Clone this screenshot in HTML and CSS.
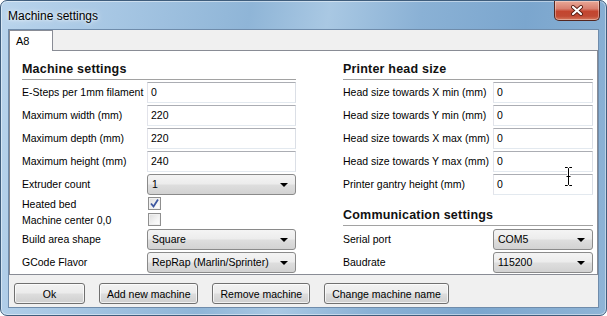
FILE: index.html
```html
<!DOCTYPE html>
<html lang="en">
<head>
    <meta charset="UTF-8">
    <title>Machine settings</title>
    <link rel="stylesheet" href="styles.css">
</head>
<body>
    <div class="window">
        <div class="titlebar">
            <span class="title">Machine settings</span>
            <div class="close-btn">
                <svg width="14" height="11" viewBox="0 0 14 11">
                    <path d="M3 2 L11 9 M11 2 L3 9" stroke="#5a1f14" stroke-width="4" stroke-linecap="round"/>
                    <path d="M3 2 L11 9 M11 2 L3 9" stroke="#fff" stroke-width="2.2" stroke-linecap="round"/>
                </svg>
            </div>
        </div>

        <div class="client">
            <div class="tabs">
                <div class="tab active">A8</div>
            </div>

            <div class="panel">
                <div class="column left-col">
                    <div class="section-title">Machine settings</div>

                    <span class="label">E-Steps per 1mm filament</span>
                    <div class="textbox">0</div>
                    <span class="label">Maximum width (mm)</span>
                    <div class="textbox">220</div>
                    <span class="label">Maximum depth (mm)</span>
                    <div class="textbox">220</div>
                    <span class="label">Maximum height (mm)</span>
                    <div class="textbox">240</div>
                    <span class="label">Extruder count</span>
                    <div class="combo">1<span class="arrow"></span></div>

                    <span class="label small-row">Heated bed</span>
                    <div class="small-row">
                        <div class="checkbox">
                            <svg width="11" height="11" viewBox="0 0 11 11">
                                <path d="M2 5.5 L4.5 8.5 L9 1.5" fill="none" stroke="#3d57a0" stroke-width="1.8"/>
                            </svg>
                        </div>
                    </div>
                    <span class="label small-row">Machine center 0,0</span>
                    <div class="small-row">
                        <div class="checkbox"></div>
                    </div>

                    <span class="label">Build area shape</span>
                    <div class="combo">Square<span class="arrow"></span></div>
                    <span class="label">GCode Flavor</span>
                    <div class="combo">RepRap (Marlin/Sprinter)<span class="arrow"></span></div>
                </div>

                <div class="column right-col">
                    <div class="section-title">Printer head size</div>

                    <span class="label">Head size towards X min (mm)</span>
                    <div class="textbox">0</div>
                    <span class="label">Head size towards Y min (mm)</span>
                    <div class="textbox">0</div>
                    <span class="label">Head size towards X max (mm)</span>
                    <div class="textbox">0</div>
                    <span class="label">Head size towards Y max (mm)</span>
                    <div class="textbox">0</div>
                    <span class="label">Printer gantry height (mm)</span>
                    <div class="textbox">0</div>

                    <div class="section-title comm">Communication settings</div>

                    <span class="label">Serial port</span>
                    <div class="combo">COM5<span class="arrow"></span></div>
                    <span class="label">Baudrate</span>
                    <div class="combo">115200<span class="arrow"></span></div>
                </div>

                <!-- mouse cursor over the panel -->
                <svg class="ibeam" width="9" height="21" viewBox="0 0 9 21">
                    <path d="M1 1.5 H3.5 L4.5 2.5 L5.5 1.5 H8 M4.5 2.5 V18.5 M1 19.5 H3.5 L4.5 18.5 L5.5 19.5 H8 M2.5 10.5 H6.5" fill="none" stroke="#fff" stroke-width="3"/>
                    <path d="M1 1.5 H3.5 L4.5 2.5 L5.5 1.5 H8 M4.5 2.5 V18.5 M1 19.5 H3.5 L4.5 18.5 L5.5 19.5 H8 M2.5 10.5 H6.5" fill="none" stroke="#000" stroke-width="1"/>
                </svg>
            </div>

            <div class="buttons">
                <button class="btn btn-ok">Ok</button>
                <button class="btn">Add new machine</button>
                <button class="btn">Remove machine</button>
                <button class="btn">Change machine name</button>
            </div>
        </div>
    </div>
</body>
</html>
```

FILE: styles.css
```css
body {
    margin: 0;
    padding: 0;
    background-color: #fff;
    font-family: 'Liberation Sans', Arial, sans-serif;
    font-size: 10.5px;
    color: #000;
}

.window {
    width: 607px;
    height: 316px;
    box-sizing: border-box;
    border: 1px solid #3f5d7c;
    border-radius: 7px;
    background: linear-gradient(100deg, #b9d4ec 0%, #a6c6e3 18%, #8fb5d7 38%, #a9c8e3 50%, #8ab1d5 64%, #7ba6ce 80%, #8fb4d6 100%);
    box-shadow: inset 0 0 0 1px rgba(255, 255, 255, 0.45);
    overflow: hidden;
}

.titlebar {
    height: 28px;
    display: flex;
    align-items: flex-start;
}

.title {
    margin: 8px 0 0 7px;
    font-size: 12px;
    line-height: 14px;
    text-shadow: 0 0 6px rgba(255, 255, 255, 0.9), 0 0 3px rgba(255, 255, 255, 0.8);
}

.close-btn {
    margin-left: auto;
    margin-right: 6px;
    width: 46px;
    height: 20px;
    box-sizing: border-box;
    border: 1px solid #54261f;
    border-top: none;
    border-radius: 0 0 5px 5px;
    background: linear-gradient(#e9a897 0%, #d98070 40%, #c3452f 55%, #c14a34 80%, #d67a5e 100%);
    box-shadow: inset 0 0 0 1px rgba(255, 255, 255, 0.35);
    display: flex;
    align-items: center;
    justify-content: center;
}

.client {
    margin: 0 7px;
    height: 279px;
    box-sizing: border-box;
    border: 1px solid #6f8cab;
    background-color: #f0f0f0;
    display: flex;
    flex-direction: column;
}

.tabs {
    height: 20px;
    display: flex;
    position: relative;
    z-index: 1;
}

.tab {
    width: 44px;
    height: 21px;
    box-sizing: border-box;
    padding: 4px 0 0 6px;
    border: 1px solid #898c95;
    border-bottom: none;
    background-color: #fff;
    font-size: 11px;
    line-height: 13px;
}

.panel {
    height: 225px;
    box-sizing: border-box;
    border: 1px solid #898c95;
    background-color: #fff;
    padding-left: 12px;
    display: flex;
    gap: 47px;
    position: relative;
}

.column {
    display: grid;
    row-gap: 2px;
    align-content: start;
}

.left-col {
    grid-template-columns: 125px 149px;
}

.right-col {
    grid-template-columns: 150px 100px;
}

.section-title {
    grid-column: 1 / 3;
    padding: 10px 0 1px 0;
    border-bottom: 1px solid #a2a2a2;
    font-size: 12.5px;
    font-weight: bold;
    letter-spacing: 0.2px;
    line-height: 17px;
    color: #111;
}

.section-title.comm {
    margin-bottom: 1px;
}

.label {
    height: 21px;
    line-height: 21px;
    white-space: nowrap;
}

.textbox {
    height: 21px;
    box-sizing: border-box;
    border: 1px solid;
    border-color: #abadb3 #dbdfe6 #e3e9ef #e2e3ea;
    padding-left: 3px;
    line-height: 19px;
}

.combo {
    height: 21px;
    box-sizing: border-box;
    border: 1px solid #8a8a8a;
    border-radius: 3px;
    background: linear-gradient(#f4f4f4 0%, #ececec 48%, #dedede 52%, #d2d2d2 100%);
    padding-left: 4px;
    line-height: 19px;
    position: relative;
}

.arrow {
    position: absolute;
    right: 7px;
    top: 8px;
    border-left: 4px solid transparent;
    border-right: 4px solid transparent;
    border-top: 4px solid #000;
}

.small-row {
    height: 14px;
    line-height: 14px;
}

.checkbox {
    width: 13px;
    height: 13px;
    box-sizing: border-box;
    margin-left: 1px;
    border: 1px solid #8f8f8f;
    background: linear-gradient(135deg, #dcdcdc 0%, #f4f4f4 60%, #fff 100%);
    box-shadow: inset 0 0 0 1px #f0f0f0;
    display: flex;
    align-items: center;
    justify-content: center;
}

.ibeam {
    position: absolute;
    left: 554px;
    top: 115px;
}

.buttons {
    display: flex;
    gap: 14px;
    padding: 8px 0 0 5px;
}

.btn {
    height: 21px;
    padding: 0 7px;
    font-family: 'Liberation Sans', Arial, sans-serif;
    font-size: 10.5px;
    color: #000;
    border: 1px solid #707070;
    border-radius: 3px;
    background: linear-gradient(#f2f2f2 0%, #ebebeb 48%, #dddddd 52%, #cfcfcf 100%);
    box-shadow: inset 0 0 0 1px rgba(255, 255, 255, 0.7);
}

.btn-ok {
    width: 71px;
}
```
